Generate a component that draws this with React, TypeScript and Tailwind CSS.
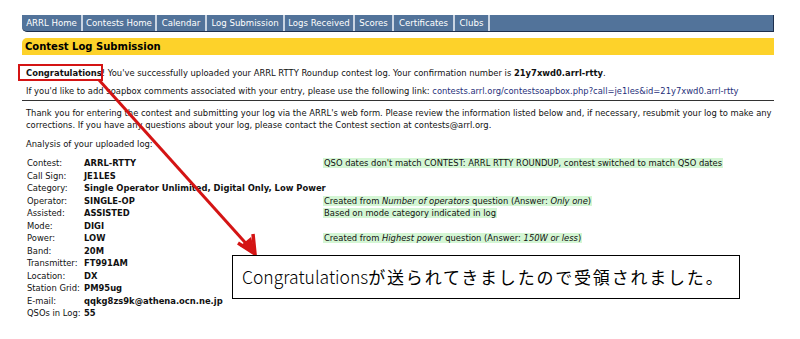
const tabs = [
  { label: "ARRL Home", w: "w-[61px]" },
  { label: "Contests Home", w: "w-[74px]" },
  { label: "Calendar", w: "w-[50px]" },
  { label: "Log Submission", w: "w-[78px]" },
  { label: "Logs Received", w: "w-[70px]" },
  { label: "Scores", w: "w-[39px]" },
  { label: "Certificates", w: "w-[61px]" },
  { label: "Clubs", w: "w-[35px]" },
];

type Row = { label: string; value: string; note?: React.ReactNode };

const rows: Row[] = [
  {
    label: "Contest:",
    value: "ARRL-RTTY",
    note: "QSO dates don't match CONTEST: ARRL RTTY ROUNDUP, contest switched to match QSO dates",
  },
  { label: "Call Sign:", value: "JE1LES" },
  { label: "Category:", value: "Single Operator Unlimited, Digital Only, Low Power" },
  {
    label: "Operator:",
    value: "SINGLE-OP",
    note: (
      <>
        Created from <i>Number of operators</i> question (Answer: <i>Only one</i>)
      </>
    ),
  },
  { label: "Assisted:", value: "ASSISTED", note: "Based on mode category indicated in log" },
  { label: "Mode:", value: "DIGI" },
  {
    label: "Power:",
    value: "LOW",
    note: (
      <>
        Created from <i>Highest power</i> question (Answer: <i>150W or less</i>)
      </>
    ),
  },
  { label: "Band:", value: "20M" },
  { label: "Transmitter:", value: "FT991AM" },
  { label: "Location:", value: "DX" },
  { label: "Station Grid:", value: "PM95ug" },
  { label: "E-mail:", value: "qqkg8zs9k@athena.ocn.ne.jp" },
  { label: "QSOs in Log:", value: "55" },
];

export default function App() {
  return (
    <div className="relative w-[800px] h-[339px] bg-white overflow-hidden font-['DejaVu_Sans',Verdana,sans-serif] text-[8.4px] text-[#111]">
      <div className="pl-[22px] pr-[26px] pt-[15px]">
        {/* nav */}
        <div className="flex h-[17px] bg-[#52739a] rounded-bl-[5px] border-b border-r border-[#1d2f4d]">
          {tabs.map((t) => (
            <div
              key={t.label}
              className={`${t.w} flex items-center justify-center text-white border-r-2 border-[#c9d4e2] text-[8.6px] whitespace-nowrap`}
            >
              {t.label}
            </div>
          ))}
        </div>

        {/* title */}
        <div className="mt-[6px] h-[17px] bg-[#fdd22a] rounded-tl-[5px] flex items-center pl-[3px] font-bold text-[10px] text-black">
          Contest Log Submission
        </div>

        <div className="pl-[4px]">
          <div className="mt-[12px] h-[12px] flex items-center whitespace-nowrap">
            <b>Congratulations</b>
            <span>
              ! You've successfully uploaded your ARRL RTTY Roundup contest log. Your confirmation
              number is <b>21y7xwd0.arrl-rtty</b>.
            </span>
          </div>
          <div className="mt-[6px] h-[12px] flex items-center whitespace-nowrap">
            If you'd like to add soapbox comments associated with your entry, please use the following
            link:&nbsp;
            <span className="text-[#1f2f7a]">
              contests.arrl.org/contestsoapbox.php?call=je1les&amp;id=21y7xwd0.arrl-rtty
            </span>
          </div>
        </div>
        <div className="mt-[3px] h-px bg-[#333]" />

        <div className="pl-[4px]">
          <p className="mt-[6px] leading-[12px]">
            Thank you for entering the contest and submitting your log via the ARRL's web form. Please
            review the information listed below and, if necessary, resubmit your log to make any
            corrections. If you have any questions about your log, please contact the Contest section
            at contests@arrl.org.
          </p>
          <p className="mt-[7px] leading-[12px]">Analysis of your uploaded log:</p>

          <div className="mt-[7px] pl-[1px] grid grid-cols-[57px_239px_1fr]">
            {rows.map((r) => (
              <div key={r.label} className="contents">
                <div className="h-[12.5px] leading-[12.5px] whitespace-nowrap">{r.label}</div>
                <div className="h-[12.5px] leading-[12.5px] font-bold whitespace-nowrap">{r.value}</div>
                <div className="h-[12.5px] leading-[12.5px] whitespace-nowrap">
                  {r.note && <span className="bg-[#d4f6d4] px-px">{r.note}</span>}
                </div>
              </div>
            ))}
          </div>
        </div>
      </div>

      {/* annotation overlay */}
      <div className="absolute left-[18px] top-[64px] w-[85px] h-[17px] border-2 border-[#d41414]" />
      <svg className="absolute left-0 top-0" width="800" height="339" viewBox="0 0 800 339">
        <line x1="99" y1="80" x2="251" y2="249" stroke="#d41414" strokeWidth="3" />
        <polyline points="238,243 255,254 253,234" fill="none" stroke="#d41414" strokeWidth="3.5" />
        <polygon points="256,255 240,246 251,237" fill="#d41414" />
      </svg>
      <div className="absolute left-[232px] top-[255px] w-[508px] h-[44px] border border-black bg-white flex items-center pl-[9px] text-black font-['Noto_Sans_CJK_JP',sans-serif] whitespace-nowrap">
        <span className="text-[17.5px] font-light">Congratulations</span>
        <span className="text-[17px] tracking-[1.8px]">が送られてきましたので受領されました。</span>
      </div>
    </div>
  );
}
